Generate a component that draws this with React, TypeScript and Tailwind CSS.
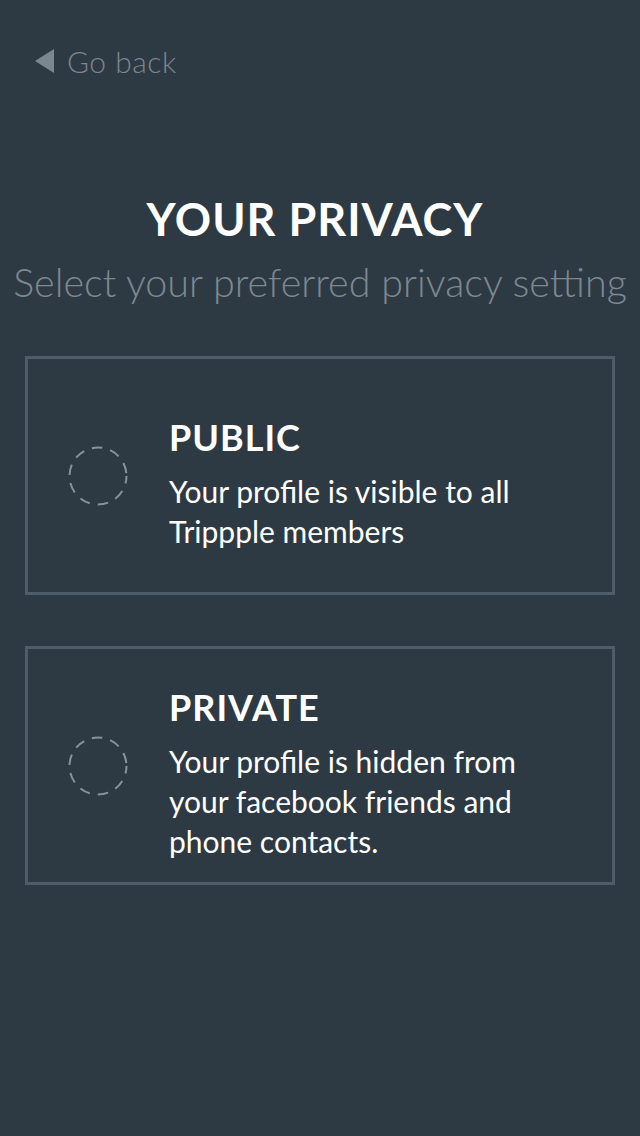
import React from "react";

function DashedCircle() {
  return (
    <svg width="64" height="64" viewBox="0 0 64 64" className="shrink-0">
      <circle cx="32" cy="32" r="28.5" fill="none" stroke="#87929a" strokeWidth="2" strokeDasharray="10.5 8.2" strokeDashoffset="3" />
    </svg>
  );
}

function Option({ title, lines }: { title: string; lines: string[] }) {
  return (
    <div className="mx-[25px] border-[3px] border-[#4f5d68] h-[239px] flex items-center pl-[38px]">
      <DashedCircle />
      <div className="ml-[39px] mt-[16px]">
        <div className="text-[36px] font-bold text-white leading-[40px] tracking-[1px]">{title}</div>
        <div className="mt-[14px] text-[30px] text-white leading-[40px] font-normal">
          {lines.map((l, i) => (
            <div key={i}>{l}</div>
          ))}
        </div>
      </div>
    </div>
  );
}

export default function App() {
  return (
    <div className="w-[640px] h-[1136px] bg-[#2e3a43] overflow-hidden" style={{ fontFamily: "Lato, 'Open Sans', sans-serif" }}>
      <div className="flex items-center pl-[35px] pt-[41px] h-[40px] box-content">
        <svg width="19" height="24" viewBox="0 0 19 24">
          <polygon points="19,0 19,24 0,12" fill="#7b868e" />
        </svg>
        <span className="ml-[13px] text-[30px] text-[#7b868e] font-light leading-[40px] tracking-[0.5px]">Go back</span>
      </div>
      <div className="mt-[112px] text-center text-white font-bold text-[45px] leading-[52px] tracking-[1px] pr-[10px]">YOUR PRIVACY</div>
      <div className="mt-[13px] text-center text-[#7d8890] font-light text-[39.5px] leading-[48px] whitespace-nowrap">
        Select your preferred privacy setting
      </div>
      <div className="mt-[50px]">
        <Option title="PUBLIC" lines={["Your profile is visible to all", "Trippple members"]} />
      </div>
      <div className="mt-[51px]">
        <Option title="PRIVATE" lines={["Your profile is hidden from", "your facebook friends and", "phone contacts."]} />
      </div>
    </div>
  );
}
